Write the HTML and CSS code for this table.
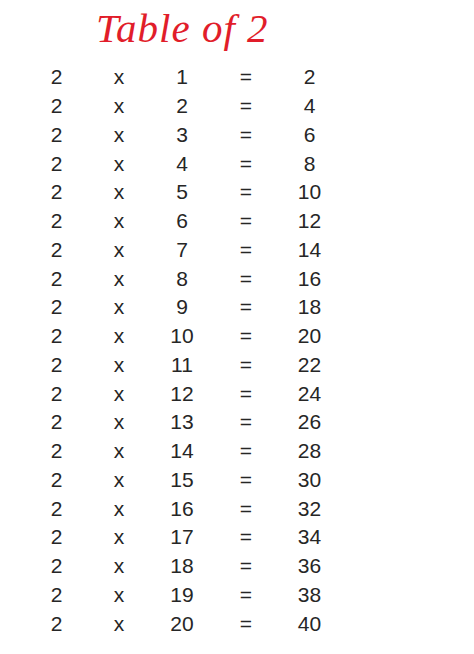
FILE: index.html
```html
<!DOCTYPE html>
<html>
<head>
<meta charset="utf-8">
<link rel="stylesheet" href="styles.css">
</head>
<body>
<div class="page">
  <h1 class="title">Table of 2</h1>
  <div class="table" id="t">
    <div class="row"><span>2</span><span>x</span><span>1</span><span>=</span><span>2</span></div>
    <div class="row"><span>2</span><span>x</span><span>2</span><span>=</span><span>4</span></div>
    <div class="row"><span>2</span><span>x</span><span>3</span><span>=</span><span>6</span></div>
    <div class="row"><span>2</span><span>x</span><span>4</span><span>=</span><span>8</span></div>
    <div class="row"><span>2</span><span>x</span><span>5</span><span>=</span><span>10</span></div>
    <div class="row"><span>2</span><span>x</span><span>6</span><span>=</span><span>12</span></div>
    <div class="row"><span>2</span><span>x</span><span>7</span><span>=</span><span>14</span></div>
    <div class="row"><span>2</span><span>x</span><span>8</span><span>=</span><span>16</span></div>
    <div class="row"><span>2</span><span>x</span><span>9</span><span>=</span><span>18</span></div>
    <div class="row"><span>2</span><span>x</span><span>10</span><span>=</span><span>20</span></div>
    <div class="row"><span>2</span><span>x</span><span>11</span><span>=</span><span>22</span></div>
    <div class="row"><span>2</span><span>x</span><span>12</span><span>=</span><span>24</span></div>
    <div class="row"><span>2</span><span>x</span><span>13</span><span>=</span><span>26</span></div>
    <div class="row"><span>2</span><span>x</span><span>14</span><span>=</span><span>28</span></div>
    <div class="row"><span>2</span><span>x</span><span>15</span><span>=</span><span>30</span></div>
    <div class="row"><span>2</span><span>x</span><span>16</span><span>=</span><span>32</span></div>
    <div class="row"><span>2</span><span>x</span><span>17</span><span>=</span><span>34</span></div>
    <div class="row"><span>2</span><span>x</span><span>18</span><span>=</span><span>36</span></div>
    <div class="row"><span>2</span><span>x</span><span>19</span><span>=</span><span>38</span></div>
    <div class="row"><span>2</span><span>x</span><span>20</span><span>=</span><span>40</span></div>
  </div>
</div>
</body>
</html>
```
FILE: styles.css
```css
html, body {
  margin: 0;
  padding: 0;
  background: #ffffff;
}
.page {
  width: 474px;
  height: 654px;
  overflow: hidden;
}
.title {
  margin: 0;
  height: 63px;
  box-sizing: border-box;
  padding: 4px 0 0 96px;
  font-family: "Liberation Serif", "Times New Roman", serif;
  font-style: italic;
  font-weight: normal;
  font-size: 41px;
  line-height: 48px;
  letter-spacing: 1px;
  color: #e11d2a;
}
.table {
  display: flex;
  flex-direction: column;
  padding-left: 25px;
}
.row {
  display: grid;
  grid-template-columns: 63px 62px 64px 64px 63px;
  height: 28.75px;
  align-items: center;
  font-family: "Liberation Sans", Arial, sans-serif;
  font-size: 21px;
  color: #262626;
}
.row span {
  text-align: center;
}
```
